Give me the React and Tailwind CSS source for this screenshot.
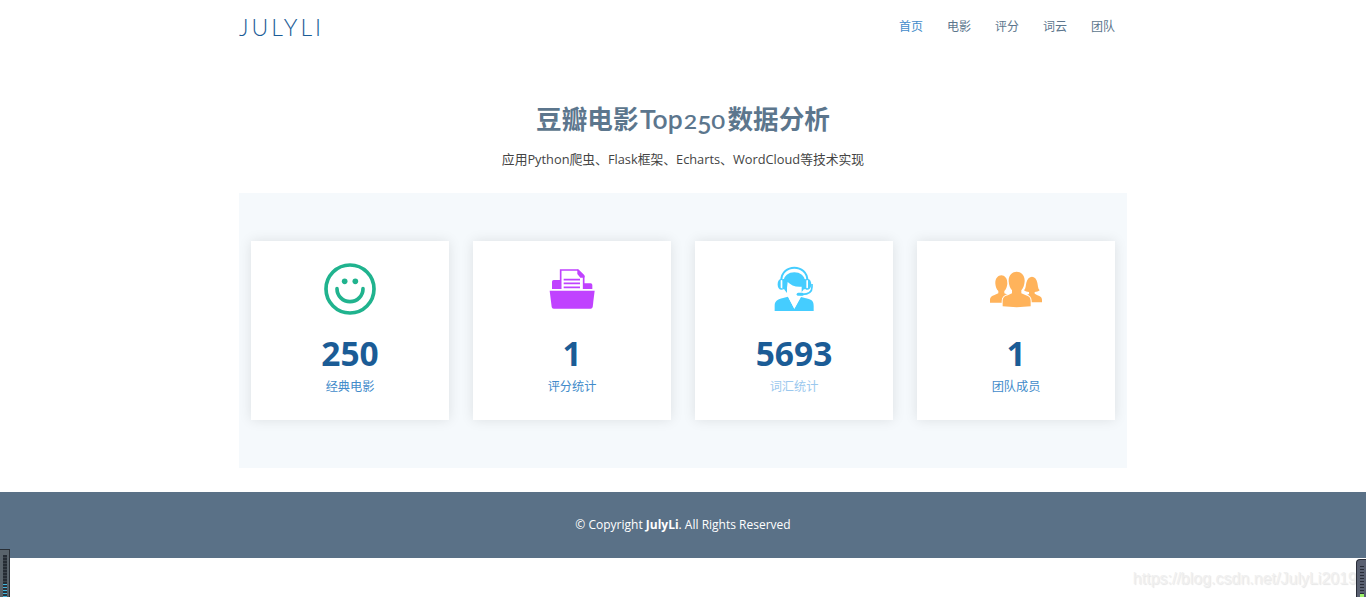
import React from "react";

const navItems = ["首页", "电影", "评分", "词云", "团队"];

function SmileIcon() {
  return (
    <svg viewBox="0 0 240 210" className="h-[70px] w-20" fill="none" stroke="#20b38e" strokeLinecap="round">
      <circle cx="120" cy="102" r="72" strokeWidth="11" />
      <path d="M81 101a39 39 0 0 0 78 0" strokeWidth="11" />
      <circle cx="104" cy="79" r="8.500" fill="#20b38e" stroke="none" />
      <circle cx="136" cy="79" r="8.500" fill="#20b38e" stroke="none" />
    </svg>
  );
}

function FolderIcon() {
  return (
    <svg viewBox="-9 0 240 210" className="h-[70px] w-20" fill="#c042ff">
      <path d="M51 102V80q0-5 5-5h19v27zM147 102V85h20q5 0 5 5v12z" />
      <path d="M77 102V45h52l17 17v40" fill="#fff" stroke="#c042ff" strokeWidth="5" />
      <path d="M127 43l21 21v4h-12l-9-11z" />
      <path d="M86 74h49M86 85h49M86 97h49" stroke="#c042ff" strokeWidth="5.500" />
      <path d="M44 107h135l-6 49q-1 5-6 5H56q-5 0-6-5z" />
    </svg>
  );
}

function SupportIcon() {
  return (
    <svg viewBox="-3 0 240 210" className="h-[70px] w-20" fill="#45cdff">
      <path d="M79 77C78 25 158 25 157 77" fill="none" stroke="#45cdff" strokeWidth="6" />
      <path d="M86 82C84 42 152 42 150 82L149 98q-4 8-9 13V95c-19 2-33-5-42-14l-2 17v16q-9-8-10-18z" />
      <path d="M83 72v32h-5c-13 0-14-31 0-32z" />
      <rect x="77" y="75" width="5" height="25" rx="2.500" fill="#fff" />
      <rect x="83" y="72" width="8" height="31" rx="2" />
      <path d="M153 72h6c13 2 13 30 0 32h-6z" />
      <rect x="154" y="75" width="5" height="25" rx="2.500" fill="#fff" />
      <rect x="145" y="72" width="8" height="31" rx="2" />
      <path d="M171 87v9c0 16-12 22-29 22h-8" fill="none" stroke="#45cdff" strokeWidth="5" />
      <rect x="125" y="113" width="21" height="9" rx="4.500" />
      <path d="M59 168v-16c0-13 8-18 22-22l18-5 19 36 20-35 21 5c12 3 17 8 17 22v15z" />
      <path d="M100 127l18 34 18-34-5-2h-26z" fill="#fff" />
    </svg>
  );
}

function TeamIcon() {
  return (
    <svg viewBox="3 0 240 210" className="h-[70px] w-20" fill="#ffb35b">
      <path d="M45 143v-8c0-10 7-13 15-16l10-4v-7c-5-5-8-12-9-22-2-34 38-34 36 0-1 10-4 17-9 22v7l12 5v23z" />
      <path d="M201 142v-7c0-9-7-12-15-15l-7-4v-5c6 0 11-2 15-5-6-6-5-15-7-23-4-24-28-24-33 0-2 8-1 17-7 23 4 3 9 5 15 5v6l-12 5v20z" />
      <path d="M83 154v-16c0-11 6-15 17-18l11-5v-9c-6-6-9-15-10-27-2-38 50-38 48 0-1 12-4 21-10 27v9l12 5c11 3 16 8 16 18v16q-42 5-84 0z" stroke="#fff" strokeWidth="6" paintOrder="stroke" />
    </svg>
  );
}

const stats = [
  { value: "250", label: "经典电影", Icon: SmileIcon },
  { value: "1", label: "评分统计", Icon: FolderIcon },
  { value: "5693", label: "词汇统计", Icon: SupportIcon, faded: true },
  { value: "1", label: "团队成员", Icon: TeamIcon },
];

function StatCard({ value, label, Icon, faded }) {
  return (
    <a href="#" className="flex h-[179px] flex-col items-center bg-white pt-[14px] shadow-[0_0_12px_rgba(0,0,0,0.1)]">
      <Icon />
      <span className="mt-[6px] text-[33.500px] leading-[44px] font-bold text-[#1b5c96]">{value}</span>
      <span className={`mt-[2px] text-[12.200px] leading-[19px] ${faded ? "text-[#9bc8ee]" : "text-[#428bca]"}`}>{label}</span>
    </a>
  );
}

export default function App() {
  return (
    <div className="relative h-[597px] overflow-hidden bg-white font-['Open_Sans','Noto_Sans_CJK_SC',sans-serif] text-[#444444]">
      <header className="mx-auto flex h-[53px] w-[888px] items-center justify-between">
        <h1 className="font-[Lato,sans-serif] text-[23px] leading-[28px] font-light tracking-[3px] text-[#1b5c96]">JULYLI</h1>
        <nav className="flex gap-6 pr-3 text-[12px] leading-[20px]">
          {navItems.map((item, i) => (
            <a key={item} href="#" className={i === 0 ? "text-[#428bca]" : "text-[#5c768d]"}>{item}</a>
          ))}
        </nav>
      </header>
      <main className="mx-auto w-[888px]">
        <div className="flex h-[140px] flex-col items-center pt-[49px]">
          <h2 className="flex h-9 items-center text-[25.600px] leading-9 font-bold whitespace-nowrap text-[#5c768d]">
            <span>豆瓣电影</span>
            <span className="inline-flex w-[89px] items-baseline justify-center font-[Lato,sans-serif] text-[26.500px] font-semibold">
              <span>Top</span>
              <span className="inline-block scale-x-115 px-[1.500px] text-[20px]">2</span>
              <span className="relative top-[5px] inline-block text-[24.500px]">5</span>
              <span className="inline-block scale-x-120 px-[1.500px] text-[20px]">0</span>
            </span>
            <span>数据分析</span>
          </h2>
          <p className="mt-[11px] text-[12.800px] leading-[20px] whitespace-nowrap">应用Python爬虫、Flask框架、Echarts、WordCloud等技术实现</p>
        </div>
        <section className="grid h-[275px] grid-cols-4 gap-6 bg-[#f5f9fc] px-3 pt-12">
          {stats.map((s) => (
            <StatCard key={s.label} {...s} />
          ))}
        </section>
      </main>
      <footer className="mt-6 flex h-[66px] items-center justify-center bg-[#5a7187] text-[12px] text-white">
        <p>© Copyright <strong>JulyLi</strong>. All Rights Reserved</p>
      </footer>
      <div className="absolute right-[9px] bottom-[7px] font-['Liberation_Sans',sans-serif] text-[16px] leading-[22px] whitespace-nowrap text-[#f0f0f0] [text-shadow:1px_1px_1px_#e6e6e6]">
        https://blog.csdn.net/JulyLi2019
      </div>
      <div className="absolute bottom-0 left-0 h-12 w-[10px] border-t border-r border-[#292f36] bg-[#59636b] pt-[5px] pl-[3px]">
        <div className="h-[29px] w-1 bg-[repeating-linear-gradient(#252c34_0_2px,#3b434b_2px_3px)]" />
        <div className="h-[14px] w-1 bg-[repeating-linear-gradient(#43b4dc_0_1px,#29323b_1px_3px)]" />
      </div>
      <div className="absolute right-0 bottom-0 h-[38px] w-[10px] rounded-tl border-t border-l border-[#292d38] bg-[#596071] pt-[6px] pl-[3px]">
        <div className="h-[28px] w-1 bg-[repeating-linear-gradient(#282c38_0_1px,#596071_1px_3px)]" />
        <div className="h-[3px] w-1 bg-[#9df36b]" />
      </div>
    </div>
  );
}
